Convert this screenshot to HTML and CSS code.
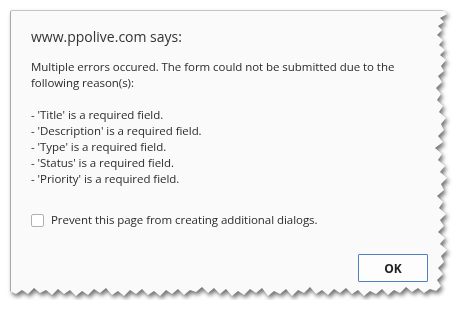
FILE: index.html
```html
<!DOCTYPE html>
<html lang="en">
<head>
  <meta charset="UTF-8">
  <title>www.ppolive.com says:</title>
  <link rel="stylesheet" href="styles.css">
</head>
<body>
  <div class="sheet">
    <div class="dialog">
      <h1 class="title">www.ppolive.com says:</h1>
      <div class="message">
        <p>Multiple errors occured. The form could not be submitted due to the following reason(s):</p>
        <ul class="errors">
          <li>- 'Title' is a required field.</li>
          <li>- 'Description' is a required field.</li>
          <li>- 'Type' is a required field.</li>
          <li>- 'Status' is a required field.</li>
          <li>- 'Priority' is a required field.</li>
        </ul>
      </div>
      <label class="suppress">
        <span class="box"></span>
        Prevent this page from creating additional dialogs.
      </label>
      <div class="footer">
        <button class="ok">OK</button>
      </div>
    </div>
  </div>
</body>
</html>
```

FILE: styles.css
```css
body {
  margin: 0;
  background: #fff;
  font-family: "Open Sans", "Noto Sans", sans-serif;
  color: #2b2b2b;
}
.sheet {
  width: 440px;
  margin: 10px 0 0 10px;
  filter: drop-shadow(2px 3px 2px rgba(0, 0, 0, 0.55));
}
.dialog {
  box-sizing: border-box;
  height: 290px;
  padding: 15px 22px 0 20px;
  background: #fafafa;
  border-top: 1px solid #c4c4c4;
  border-left: 1px solid #a8a8a8;
  border-top-left-radius: 2px;
  clip-path: polygon(0 0, 433px 0, 437px 4px, 430px 8px, 434px 12px, 428px 16px, 432px 20px, 427px 25px, 433px 30px, 429px 35px, 435px 40px, 430px 45px, 436px 50px, 431px 56px, 434px 61px, 428px 66px, 432px 72px, 426px 78px, 431px 84px, 427px 90px, 433px 96px, 429px 102px, 436px 108px, 431px 114px, 434px 120px, 428px 126px, 433px 132px, 425px 138px, 432px 144px, 428px 150px, 435px 156px, 430px 162px, 437px 168px, 431px 174px, 434px 180px, 427px 186px, 433px 192px, 429px 198px, 436px 204px, 430px 210px, 434px 216px, 428px 222px, 435px 228px, 430px 234px, 437px 240px, 431px 246px, 434px 252px, 428px 258px, 433px 264px, 427px 270px, 431px 276px, 426px 281px, 420px 279px, 414px 283px, 408px 278px, 402px 282px, 396px 277px, 390px 283px, 384px 280px, 378px 285px, 372px 279px, 366px 284px, 360px 281px, 354px 286px, 348px 280px, 342px 284px, 336px 278px, 330px 283px, 324px 279px, 318px 285px, 312px 280px, 306px 284px, 300px 277px, 294px 283px, 288px 280px, 282px 286px, 276px 279px, 270px 284px, 264px 281px, 258px 286px, 252px 278px, 246px 283px, 240px 279px, 234px 285px, 228px 281px, 222px 286px, 216px 279px, 210px 284px, 204px 278px, 198px 283px, 192px 277px, 186px 282px, 180px 280px, 174px 285px, 168px 279px, 162px 284px, 156px 280px, 150px 286px, 144px 281px, 138px 285px, 132px 279px, 126px 284px, 120px 280px, 114px 286px, 108px 281px, 102px 285px, 96px 278px, 90px 283px, 84px 279px, 78px 285px, 72px 281px, 66px 286px, 60px 280px, 54px 284px, 48px 279px, 42px 285px, 36px 280px, 30px 283px, 24px 278px, 18px 284px, 12px 280px, 6px 284px, 0 281px);
}
.title {
  margin: 0;
  font-size: 14px;
  font-weight: normal;
  line-height: 21px;
  color: #333;
}
.message {
  margin-top: 12px;
  font-size: 11.5px;
  line-height: 16px;
  letter-spacing: -0.05px;
}
.message p {
  margin: 0 0 16px;
  width: 380px;
}
.errors {
  margin: 0;
  padding: 0;
  list-style: none;
}
.suppress {
  display: flex;
  align-items: center;
  gap: 7px;
  margin-top: 25px;
  font-size: 11.5px;
  letter-spacing: -0.05px;
  line-height: 16px;
}
.box {
  width: 11px;
  height: 11px;
  border: 1px solid #b0b0b0;
  border-radius: 2px;
  background: #fff;
}
.footer {
  display: flex;
  justify-content: flex-end;
  margin-top: 26px;
}
.ok {
  width: 70px;
  height: 28px;
  border: 1px solid #4f80bd;
  border-radius: 1px;
  background: #fdfdfd;
  font-family: "Open Sans", "Noto Sans", sans-serif;
  font-size: 12px;
  font-weight: bold;
  color: #222;
}
```
